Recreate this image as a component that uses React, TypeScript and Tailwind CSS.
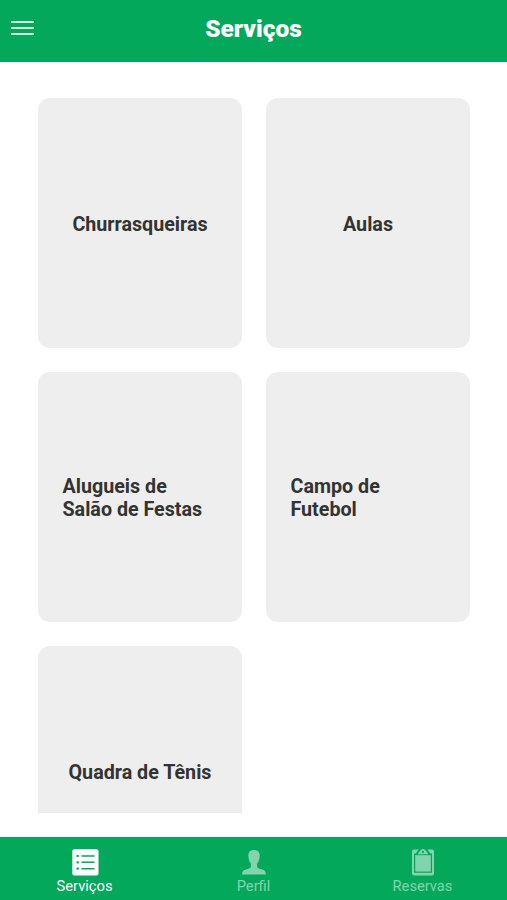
type Tab = "servicos" | "perfil" | "reservas";

const services = [
  { label: "Churrasqueiras" },
  { label: "Aulas" },
  { label: "Alugueis de Salão de Festas" },
  { label: "Campo de Futebol" },
  { label: "Quadra de Tênis" },
];

const tabs: { id: Tab; label: string }[] = [
  { id: "servicos", label: "Serviços" },
  { id: "perfil", label: "Perfil" },
  { id: "reservas", label: "Reservas" },
];

function TabIcon({ id }: { id: Tab }) {
  if (id === "servicos") {
    return (
      <svg width="28" height="28" viewBox="0 0 28 28" fill="none">
        <rect x="1.300" y="1.300" width="26.200" height="26.200" rx="2" fill="#fff" />
        <path d="M10.500 8h13M10.500 14.300h13M10.500 20.700h13" stroke="#04a85b" strokeWidth="1.500" />
        <path d="M5.600 8h2.200M5.600 14.300h2.200M5.600 20.700h2.200" stroke="#04a85b" strokeWidth="2.200" />
      </svg>
    );
  }
  if (id === "perfil") {
    return (
      <svg width="28" height="28" viewBox="0 0 28 28" fill="currentColor">
        <path d="M14 2c-3.800 0-5.800 2.200-5.700 5.800.1 1.800.5 3 .7 4 .3 1.600 1 2.800 1.900 3.900v2.600c0 1.600-1.300 2.100-3.200 2.600C4 21.700 2.300 22.500 2 26.600h24c-.3-4.100-2-4.900-5.700-5.700-1.900-.5-3.200-1-3.200-2.600v-2.600c.9-1.100 1.600-2.300 1.900-3.900.2-1 .6-2.200.7-4C19.800 4.200 17.800 2 14 2z" />
      </svg>
    );
  }
  return (
    <svg width="28" height="28" viewBox="0 0 28 28" fill="none">
      {/* board with a cut-out frame around the sheet */}
      <path
        fillRule="evenodd"
        fill="currentColor"
        d="M5 1.500h4.500L6.800 5.600H5v19.200h18V5.600h-1.800L18.500 1.500H23a2 2 0 0 1 2 2v22a2 2 0 0 1-2 2H5a2 2 0 0 1-2-2v-22a2 2 0 0 1 2-2z"
      />
      <path fill="currentColor" d="M6.200 7.200h15.600v16.400H6.200z" />
      <path
        fillRule="evenodd"
        fill="currentColor"
        d="M8.600 6.200l2.600-3.600C12 1.500 12.900 1 14 1s2 .5 2.800 1.600l2.600 3.600zM14 2.800a1.100 1.100 0 1 0 0 2.200 1.100 1.100 0 0 0 0-2.200z"
      />
    </svg>
  );
}

export default function App() {
  const active: Tab = "servicos";

  return (
    <div className="flex h-[900px] w-[507px] flex-col overflow-hidden bg-white font-['Roboto',sans-serif]">
      <header className="grid h-[62px] shrink-0 grid-cols-[1fr_auto_1fr] items-center bg-[#04a85b] px-[11px] pb-[3px] text-white">
        <button aria-label="Menu" className="flex w-[23px] flex-col gap-[4px] pb-[3px]">
          <span className="h-[2px] w-full bg-[#d5f5e4]" />
          <span className="h-[2px] w-full bg-[#d5f5e4]" />
          <span className="h-[2px] w-full bg-[#d5f5e4]" />
        </button>
        <h1 className="text-[24.500px] font-black">Serviços</h1>
      </header>

      <main className="mb-6 min-h-0 flex-1 overflow-hidden px-[38px] pt-9">
        <div className="grid grid-cols-[204px_204px] gap-x-6 gap-y-6">
          {services.map((service) => (
            <button
              key={service.label}
              className="flex h-[250px] items-center justify-center rounded-[12px] bg-[#eee] px-[24.5px] pt-[2px] text-left text-[19.700px] leading-[23px] font-bold text-[#333]"
            >
              {service.label}
            </button>
          ))}
        </div>
      </main>

      <nav className="grid h-[63px] shrink-0 grid-cols-3 bg-[#04a85b] pt-[11px]">
        {tabs.map((tab) => (
          <button
            key={tab.id}
            className={`flex flex-col items-center gap-px text-[14.700px] leading-[19px] ${
              tab.id === active ? "text-white" : "text-white/50"
            }`}
          >
            <TabIcon id={tab.id} />
            {tab.label}
          </button>
        ))}
      </nav>
    </div>
  );
}
